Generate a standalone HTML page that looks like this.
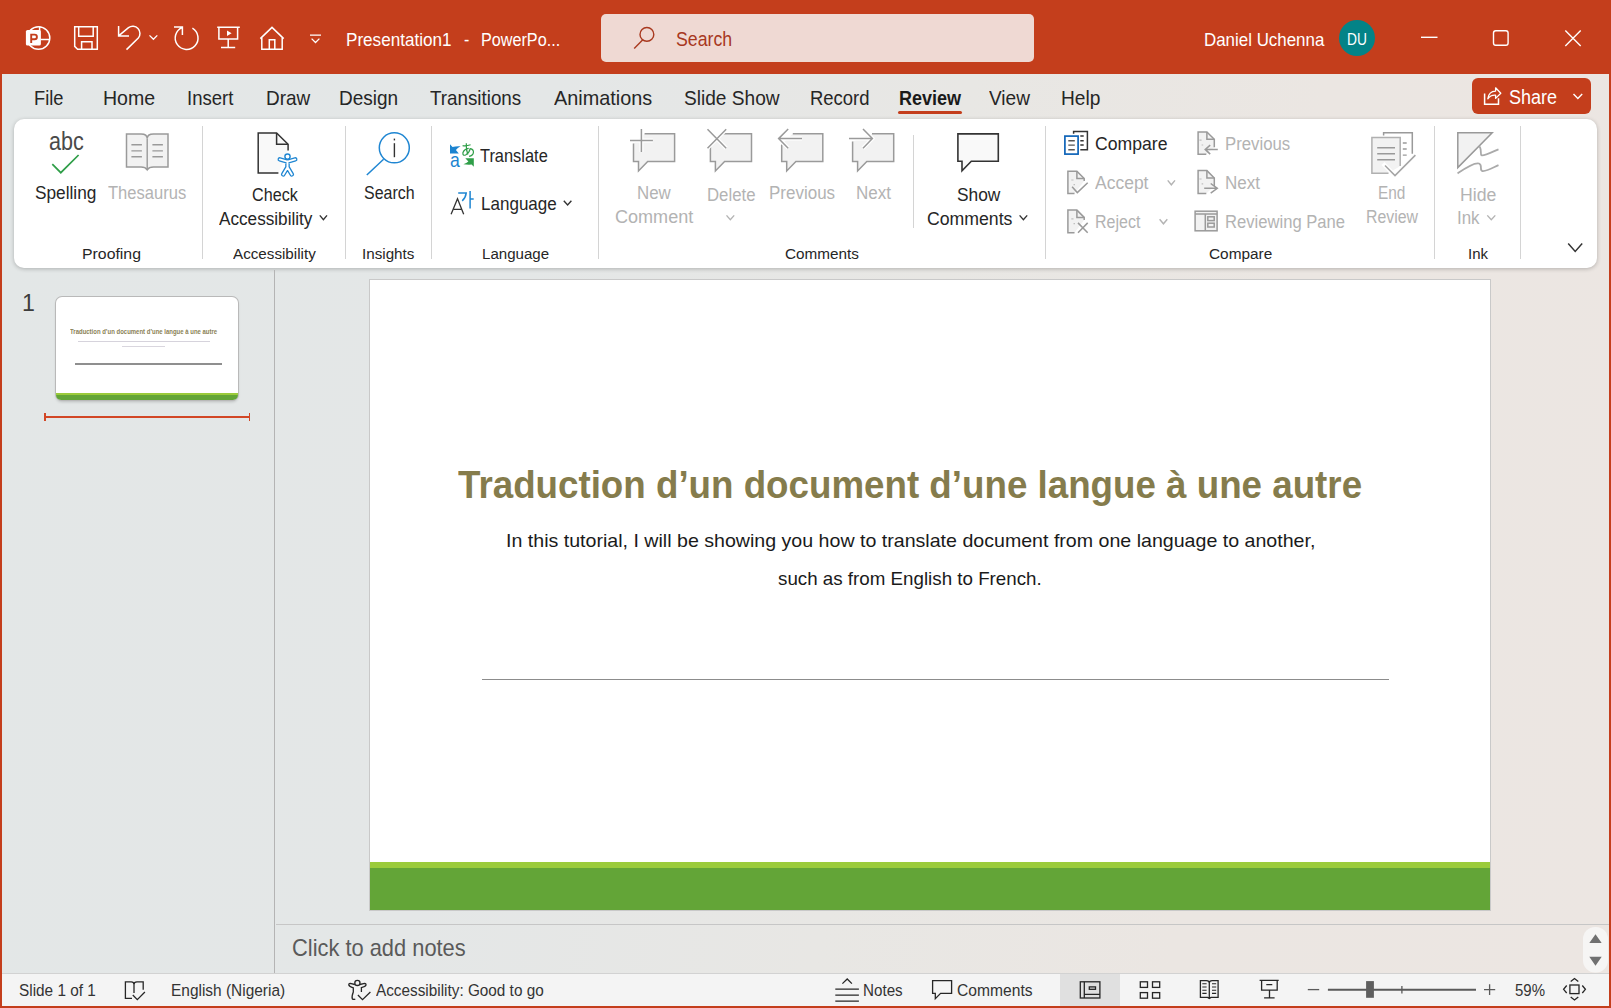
<!DOCTYPE html>
<html><head><meta charset="utf-8"><style>
html,body{margin:0;padding:0;width:1611px;height:1008px;overflow:hidden;}
body{position:relative;font-family:"Liberation Sans",sans-serif;background:#e8e6e4;}
.t{position:absolute;white-space:pre;line-height:1;transform-origin:0 0;}
svg{overflow:visible}
</style></head><body>
<div style="position:absolute;left:0px;top:0px;width:1611px;height:1008px;background:linear-gradient(100deg,#e3e7e7 0%,#e4e7e7 32%,#e8e7e4 55%,#ebe6e2 75%,#ece6e2 100%);"></div>
<div style="position:absolute;left:0px;top:0px;width:1611px;height:74px;background:#c43e1c;"></div>
<div style="position:absolute;left:0px;top:0px;width:2px;height:1008px;background:#c43e1c;"></div>
<div style="position:absolute;left:1609px;top:0px;width:2px;height:1008px;background:#c43e1c;"></div>
<div style="position:absolute;left:0px;top:1006px;width:1611px;height:2px;background:#c43e1c;"></div>
<div style="position:absolute;left:14px;top:119px;width:1583px;height:149px;background:#fff;border-radius:10px;box-shadow:0 1px 4px rgba(0,0,0,0.24);"></div>
<div style="position:absolute;left:274px;top:270px;width:1px;height:703px;background:#b4b4b4;"></div>
<div style="position:absolute;left:370px;top:280px;width:1120px;height:630px;background:#fff;box-shadow:0 0 0 1px #c9c9c9;"></div>
<div style="position:absolute;left:370px;top:862px;width:1120px;height:6px;background:#9bcb3b;"></div>
<div style="position:absolute;left:370px;top:868px;width:1120px;height:42px;background:#63a537;"></div>
<div style="position:absolute;left:276px;top:924px;width:1333px;height:1px;background:#c6c6c6;"></div>
<div style="position:absolute;left:2px;top:974px;width:1607px;height:32px;background:#f4f4f4;box-shadow:0 -1px 0 #d2d2d2;"></div>
<div style="position:absolute;left:601px;top:14px;width:433px;height:48px;background:#efd9d3;border-radius:5px;"></div>
<div class="t" style="left:345.5px;top:30.6px;font-size:18.26px;color:#fff;transform:scaleX(0.9362);">Presentation1</div>
<div class="t" style="left:463.7px;top:30.6px;font-size:18.26px;color:#fff;transform:scaleX(0.8715);">-</div>
<div class="t" style="left:480.8px;top:30.6px;font-size:18.26px;color:#fff;transform:scaleX(0.8867);">PowerPo...</div>
<div class="t" style="left:675.8px;top:30.4px;font-size:19.71px;color:#a8381e;transform:scaleX(0.9015);">Search</div>
<div class="t" style="left:1203.6px;top:30.7px;font-size:18.26px;color:#fff;transform:scaleX(0.9266);">Daniel Uchenna</div>
<div style="position:absolute;left:1339px;top:20px;width:36px;height:36px;background:#038387;border-radius:50%;"></div>
<div class="t" style="left:34.3px;top:88.4px;font-size:20.14px;color:#262626;transform:scaleX(0.9088);">File</div>
<div class="t" style="left:103.4px;top:88.4px;font-size:20.14px;color:#262626;transform:scaleX(0.9714);">Home</div>
<div class="t" style="left:187.4px;top:88.4px;font-size:20.14px;color:#262626;transform:scaleX(0.9210);">Insert</div>
<div class="t" style="left:265.6px;top:88.4px;font-size:20.14px;color:#262626;transform:scaleX(0.9424);">Draw</div>
<div class="t" style="left:339.3px;top:88.4px;font-size:20.14px;color:#262626;transform:scaleX(0.9441);">Design</div>
<div class="t" style="left:430.4px;top:88.4px;font-size:20.14px;color:#262626;transform:scaleX(0.9338);">Transitions</div>
<div class="t" style="left:554.3px;top:88.4px;font-size:20.14px;color:#262626;transform:scaleX(0.9854);">Animations</div>
<div class="t" style="left:684.0px;top:88.4px;font-size:20.14px;color:#262626;transform:scaleX(0.9496);">Slide Show</div>
<div class="t" style="left:809.5px;top:88.4px;font-size:20.14px;color:#262626;transform:scaleX(0.9178);">Record</div>
<div class="t" style="left:989.0px;top:88.4px;font-size:20.14px;color:#262626;transform:scaleX(0.9469);">View</div>
<div class="t" style="left:1060.6px;top:88.4px;font-size:20.14px;color:#262626;transform:scaleX(0.9510);">Help</div>
<div class="t" style="left:898.7px;top:88.4px;font-size:20.14px;color:#1a1a1a;font-weight:bold;transform:scaleX(0.8959);">Review</div>
<div style="position:absolute;left:898px;top:111px;width:64px;height:3px;background:#c43e1c;border-radius:2px;"></div>
<div style="position:absolute;left:1472px;top:78px;width:119px;height:36px;background:#c43e1c;border-radius:6px;"></div>
<div class="t" style="left:1508.6px;top:88.0px;font-size:19.57px;color:#fff;transform:scaleX(0.9213);">Share</div>
<div class="t" style="left:35.4px;top:183.9px;font-size:18.26px;color:#262626;transform:scaleX(0.9450);">Spelling</div>
<div class="t" style="left:108.0px;top:183.9px;font-size:18.26px;color:#b3b3b3;transform:scaleX(0.9064);">Thesaurus</div>
<div class="t" style="left:251.7px;top:185.9px;font-size:18.26px;color:#262626;transform:scaleX(0.8849);">Check</div>
<div class="t" style="left:218.5px;top:209.9px;font-size:18.26px;color:#262626;transform:scaleX(0.9402);">Accessibility</div>
<div class="t" style="left:363.6px;top:183.7px;font-size:18.26px;color:#262626;transform:scaleX(0.8745);">Search</div>
<div class="t" style="left:480.2px;top:146.7px;font-size:18.26px;color:#262626;transform:scaleX(0.8987);">Translate</div>
<div class="t" style="left:481.2px;top:195.2px;font-size:18.26px;color:#262626;transform:scaleX(0.9330);">Language</div>
<div class="t" style="left:637.0px;top:183.8px;font-size:18.26px;color:#b3b3b3;transform:scaleX(0.9252);">New</div>
<div class="t" style="left:614.7px;top:207.8px;font-size:18.26px;color:#b3b3b3;transform:scaleX(0.9892);">Comment</div>
<div class="t" style="left:707.2px;top:186.1px;font-size:18.26px;color:#b3b3b3;transform:scaleX(0.9188);">Delete</div>
<div class="t" style="left:768.9px;top:183.8px;font-size:18.26px;color:#b3b3b3;transform:scaleX(0.9304);">Previous</div>
<div class="t" style="left:856.0px;top:183.8px;font-size:18.26px;color:#b3b3b3;transform:scaleX(0.9322);">Next</div>
<div class="t" style="left:956.6px;top:186.1px;font-size:18.26px;color:#262626;transform:scaleX(0.9501);">Show</div>
<div class="t" style="left:926.5px;top:209.9px;font-size:18.26px;color:#262626;transform:scaleX(0.9685);">Comments</div>
<div class="t" style="left:1094.5px;top:135.0px;font-size:18.26px;color:#262626;transform:scaleX(0.9653);">Compare</div>
<div class="t" style="left:1094.5px;top:173.9px;font-size:18.26px;color:#b3b3b3;transform:scaleX(0.9583);">Accept</div>
<div class="t" style="left:1094.5px;top:212.5px;font-size:18.26px;color:#b3b3b3;transform:scaleX(0.8771);">Reject</div>
<div class="t" style="left:1224.9px;top:134.9px;font-size:18.26px;color:#b3b3b3;transform:scaleX(0.9191);">Previous</div>
<div class="t" style="left:1224.9px;top:173.6px;font-size:18.26px;color:#b3b3b3;transform:scaleX(0.9322);">Next</div>
<div class="t" style="left:1224.9px;top:212.8px;font-size:18.26px;color:#b3b3b3;transform:scaleX(0.9101);">Reviewing Pane</div>
<div class="t" style="left:1378.2px;top:183.8px;font-size:18.26px;color:#b3b3b3;transform:scaleX(0.8433);">End</div>
<div class="t" style="left:1366.4px;top:208.0px;font-size:18.26px;color:#b3b3b3;transform:scaleX(0.8702);">Review</div>
<div class="t" style="left:1459.8px;top:186.1px;font-size:18.26px;color:#b3b3b3;transform:scaleX(0.9692);">Hide</div>
<div class="t" style="left:1457.4px;top:209.4px;font-size:18.26px;color:#b3b3b3;transform:scaleX(0.9278);">Ink</div>
<div class="t" style="left:81.7px;top:246.1px;font-size:15.36px;color:#262626;transform:scaleX(1.0311);">Proofing</div>
<div class="t" style="left:232.6px;top:246.1px;font-size:15.36px;color:#262626;transform:scaleX(0.9897);">Accessibility</div>
<div class="t" style="left:361.8px;top:246.1px;font-size:15.36px;color:#262626;transform:scaleX(0.9897);">Insights</div>
<div class="t" style="left:481.7px;top:246.1px;font-size:15.36px;color:#262626;transform:scaleX(0.9817);">Language</div>
<div class="t" style="left:785.0px;top:246.1px;font-size:15.36px;color:#262626;transform:scaleX(0.9950);">Comments</div>
<div class="t" style="left:1208.7px;top:246.1px;font-size:15.36px;color:#262626;transform:scaleX(1.0019);">Compare</div>
<div class="t" style="left:1467.6px;top:246.1px;font-size:15.36px;color:#262626;transform:scaleX(0.9759);">Ink</div>
<div style="position:absolute;left:202px;top:126px;width:1px;height:133px;background:#d4d4d4;"></div>
<div style="position:absolute;left:345px;top:126px;width:1px;height:133px;background:#d4d4d4;"></div>
<div style="position:absolute;left:431px;top:126px;width:1px;height:133px;background:#d4d4d4;"></div>
<div style="position:absolute;left:598px;top:126px;width:1px;height:133px;background:#d4d4d4;"></div>
<div style="position:absolute;left:1045px;top:126px;width:1px;height:133px;background:#d4d4d4;"></div>
<div style="position:absolute;left:1434px;top:126px;width:1px;height:133px;background:#d4d4d4;"></div>
<div style="position:absolute;left:1520px;top:126px;width:1px;height:133px;background:#d4d4d4;"></div>
<div style="position:absolute;left:913px;top:135px;width:1px;height:93px;background:#d4d4d4;"></div>
<div class="t" style="left:21.9px;top:291.9px;font-size:23.19px;color:#3c3c3c;transform:scaleX(1.0000);">1</div>
<div class="t" style="left:458.4px;top:465.8px;font-size:38.84px;color:#857c4c;font-weight:bold;transform:scaleX(0.9460);">Traduction d’un document d’une langue à une autre</div>
<div class="t" style="left:505.5px;top:531.8px;font-size:18.84px;color:#1a1a1a;transform:scaleX(1.0408);">In this tutorial, I will be showing you how to translate document from one language to another,</div>
<div class="t" style="left:778.3px;top:569.6px;font-size:18.84px;color:#1a1a1a;transform:scaleX(0.9961);">such as from English to French.</div>
<div style="position:absolute;left:482px;top:679px;width:907px;height:1px;background:#8c8c8c;"></div>
<div class="t" style="left:292.0px;top:936.5px;font-size:23.19px;color:#5a5a5a;transform:scaleX(0.9424);">Click to add notes</div>
<div class="t" style="left:18.9px;top:983.2px;font-size:15.65px;color:#333;transform:scaleX(0.9819);">Slide 1 of 1</div>
<div class="t" style="left:171.3px;top:983.2px;font-size:15.65px;color:#333;transform:scaleX(0.9871);">English (Nigeria)</div>
<div class="t" style="left:375.9px;top:983.2px;font-size:15.65px;color:#333;transform:scaleX(0.9791);">Accessibility: Good to go</div>
<div class="t" style="left:862.5px;top:983.2px;font-size:15.65px;color:#333;transform:scaleX(0.9709);">Notes</div>
<div class="t" style="left:957.0px;top:983.2px;font-size:15.65px;color:#333;transform:scaleX(0.9991);">Comments</div>
<div class="t" style="left:1514.7px;top:982.8px;font-size:15.94px;color:#333;transform:scaleX(0.9402);">59%</div>
<div style="position:absolute;left:1060px;top:974px;width:60px;height:32px;background:#e0e0e0;"></div>
<svg style="position:absolute;left:0px;top:0px;" width="400" height="74" viewBox="0 0 400 74" fill="none">
<g stroke="#ffffff" stroke-width="1.5" fill="none">
 <circle cx="38.5" cy="38" r="11.3"/>
 <path d="M39.6 26.5 V31 M40.5 39.6 H49.6"/>
 <path d="M74.7 26.7 H97.3 V49.3 H77.6 L74.7 46.4 Z"/>
 <path d="M78.7 26.7 V36.2 H93.2 V26.7"/>
 <path d="M81.6 49.3 V41.8 H92 V49.3"/>
 <path d="M118.6 26 V36 H129 M119.2 35.4 L128.5 27.6 A7.2 7.2 0 0 1 138.3 38 L126.5 49.6"/>
 <path d="M149.5 35.4 L153.4 39.3 L157.3 35.4" stroke-width="1.3"/>
 <path d="M174 27 H182.4 V35 M182 27.6 A11.4 11.4 0 1 0 192.4 28.2"/>
 <path d="M217.2 27.2 H239.8 M218.9 27.2 V39 H237.6 V27.2 M228.2 39 V47.6 M221 47.6 H235.2"/>
 <path d="M260.3 38.6 L272 27.4 L283.7 38.6 M261.8 37.4 V49.2 H282.2 V37.4 M269.3 49.2 V39.8 H274.8 V49.2"/>
 <path d="M310 35.2 H321 M311.6 38.6 L315.5 42.5 L319.4 38.6" stroke-width="1.3"/>
 <path d="M642.8 39.8 L634.2 48.4" stroke="#a8381e" stroke-width="1.4"/>
 <circle cx="646.9" cy="34.4" r="6.9" stroke="#a8381e" stroke-width="1.4"/>
 <path d="M1421 37.3 H1437.5" stroke-width="1.4"/>
 <rect x="1493.5" y="30.7" width="14.6" height="14.6" rx="2.2" stroke-width="1.4"/>
 <path d="M1565.3 30.5 L1580.7 45.9 M1580.7 30.5 L1565.3 45.9" stroke-width="1.4"/>
</g>
<path d="M227 30.6 V35.9 L231.6 33.25 Z" fill="#ffffff"/>
<rect x="25.9" y="30" width="15" height="15.6" rx="1.6" fill="#ffffff"/>
<path d="M31.2 43 V34.6 H34.6 A2.3 2.3 0 0 1 34.6 39.2 H31.2" stroke="#c43e1c" stroke-width="1.9" fill="none"/>
</svg>
<div class="t" style="left:1347.1px;top:31.7px;font-size:15.80px;color:#fff;transform:scaleX(0.8722);">DU</div>
<div class="t" style="left:48.6px;top:129.1px;font-size:25.22px;color:#4a4a4a;transform:scaleX(0.8559);">abc</div>
<svg style="position:absolute;left:0px;top:0px;" width="1611" height="300" viewBox="0 0 1611 300" fill="none">
<path d="M52.3 164.2 L60.8 172.7 L78.6 155" stroke="#2f9e48" stroke-width="1.7"/>
<!-- thesaurus -->
<path d="M126.5 134 H141 Q147.2 134 147.2 138.6 Q147.2 134 153.5 134 H168 V167 H153.5 Q149 167 147.2 169.8 Q145.4 167 141 167 H126.5 Z" fill="#f2f2f2" stroke="#9a9a9a" stroke-width="1.5"/>
<path d="M147.2 138.6 V169.5 M131.4 144.7 H141.9 M131.4 150.9 H141.9 M131.4 156.8 H141.9 M152.4 144.7 H162.9 M152.4 150.9 H162.9 M152.4 156.8 H162.9" stroke="#9a9a9a" stroke-width="1.4"/>
<!-- check accessibility doc -->
<path d="M278.4 173.1 H258.2 V132.9 H276.6 L288.1 144.3 V150.6" fill="#f9f9f9" stroke="#333333" stroke-width="1.5"/>
<path d="M276.6 132.9 V144.3 H288.1" stroke="#333333" stroke-width="1.5"/>
<g stroke-linecap="round" stroke-linejoin="round">
<path d="M279.8 159.4 L287.5 161.6 L295.2 159.4 M287.5 161.6 V167.2 L283.2 174.4 M287.5 167.2 L291.8 174.4" stroke="#1f86d2" stroke-width="4.6"/>
<path d="M279.8 159.4 L287.5 161.6 L295.2 159.4 M287.5 161.6 V167.2 L283.2 174.4 M287.5 167.2 L291.8 174.4" stroke="#fff" stroke-width="2.0"/>
<circle cx="287.5" cy="156.6" r="2.6" stroke="#1f86d2" stroke-width="1.4" fill="#fff"/>
</g>
<!-- insights search -->
<circle cx="394.3" cy="147.8" r="15" stroke="#1f86d2" stroke-width="1.5"/>
<path d="M383.6 159.2 L366.8 175" stroke="#1f86d2" stroke-width="1.5"/>
<path d="M394.4 143.2 V157.2" stroke="#333333" stroke-width="1.4"/>
<rect x="393.7" y="138.6" width="1.4" height="1.8" fill="#333333"/>
<!-- translate -->
<path d="M450 144.3 L452.5 147 Q456 146 460.6 146.3 Q457.5 147.8 455.9 149.9 L458.8 153.6 H450 Z" fill="#1c84d0"/>
<path d="M465.3 158.2 H473.8 V166.7 L471.6 164.6 Q467 164.8 463.4 164.3 Q466.5 163.3 468.4 161.5 Z" fill="#2f9e48"/>
<path d="M462.6 145.6 Q466 146.4 470.6 144.8 M466.3 143.2 Q465.9 150 467.9 154.6 M468.7 148.4 Q464.3 148.8 462.9 152.8 Q462.6 156 465.6 155 Q469.3 153 470.2 148.6 Q473.8 149.3 473.4 152.6 Q473 155.6 469.1 156.4" stroke="#2f9e48" stroke-width="1.2"/>
<!-- language -->
<path d="M451.1 214.3 L457.5 198.7 L463.7 214.3 M453.8 209.3 H461.2" stroke="#333333" stroke-width="1.3"/>
<path d="M458.2 193.1 H466.2 Q465.5 198 462.2 200.9 M470.1 191.1 V208.4 M470.1 199 H473.7" stroke="#1f86d2" stroke-width="1.5"/>
<!-- comment bubbles -->
<path d="M644.6 133.7 H674.6 V161.4 H647.7 L638.5 171 V161.4 H633.5 V143.5" fill="#f2f2f2" stroke="#9a9a9a" stroke-width="1.5"/>
<path d="M630 140.4 H652.9 M641.4 129 V152" stroke="#fff" stroke-width="4"/>
<path d="M630 140.4 H652.9 M641.4 129 V152" stroke="#9a9a9a" stroke-width="1.5"/>
<path d="M721.5 133.7 H751.5 V161.4 H724.6 L715.4 171 V161.4 H710.4 V147" fill="#f2f2f2" stroke="#9a9a9a" stroke-width="1.5"/>
<path d="M707.5 129.3 L726.2 148.2 M726.2 129.3 L707.5 148.2" stroke="#fff" stroke-width="4"/>
<path d="M707.5 129.3 L726.2 148.2 M726.2 129.3 L707.5 148.2" stroke="#9a9a9a" stroke-width="1.5"/>
<path d="M792.8 133.7 H822.8 V161.4 H795.9 L786.7 171 V161.4 H781.7 V144.5" fill="#f2f2f2" stroke="#9a9a9a" stroke-width="1.5"/>
<path d="M778.6 138.6 H802 M788.2 129 L778.6 138.6 L788.2 148.2" stroke="#fff" stroke-width="4"/>
<path d="M778.6 138.6 H802 M788.2 129 L778.6 138.6 L788.2 148.2" stroke="#9a9a9a" stroke-width="1.5"/>
<path d="M872 133.7 H893.7 V161.4 H866.8 L857.6 171 V161.4 H852.6 V141.5" fill="#f2f2f2" stroke="#9a9a9a" stroke-width="1.5"/>
<path d="M849 138.6 H872.4 M863 129 L872.4 138.6 L863 148.2" stroke="#fff" stroke-width="4"/>
<path d="M849 138.6 H872.4 M863 129 L872.4 138.6 L863 148.2" stroke="#9a9a9a" stroke-width="1.5"/>
<path d="M957.9 133.9 H998.3 V161.2 H971.3 L962 170.8 V161.2 H957.9 Z" fill="#f9f9f9" stroke="#333333" stroke-width="1.6"/>
<!-- compare -->
<path d="M1073.6 133.8 V131.6 H1087.4 V149.7 H1080.3 M1080.3 136.1 H1083.7 M1080.3 140.7 H1083.7 M1080.3 145.1 H1083.7" stroke="#333333" stroke-width="1.5"/>
<rect x="1064.9" y="136.1" width="13.2" height="18" fill="#fff" stroke="#0f64b8" stroke-width="1.7"/>
<path d="M1068.3 140.7 H1074.8 M1068.3 145.1 H1074.8 M1068.3 149.7 H1074.8" stroke="#555" stroke-width="1.4"/>
<!-- accept / reject / prev / next docs -->
<g stroke="#9a9a9a" stroke-width="1.5">
<path d="M1074.5 193.4 H1067.9 V171.2 H1076.9 L1084.2 178.5 V181" fill="#f2f2f2"/>
<path d="M1076.9 171.2 V178.5 H1084.2"/>
<path d="M1072.1 186.8 L1077.3 192.6 L1087.7 182.7"/>
<path d="M1074.5 232.7 H1067.9 V210.1 H1076.9 L1084.2 217.4 V220" fill="#f2f2f2"/>
<path d="M1076.9 210.1 V217.4 H1084.2"/>
<path d="M1078 222.9 L1087.7 232.7 M1087.7 222.9 L1078 232.7"/>
<path d="M1206.3 154.3 H1198.1 V131.9 H1206.9 L1214.3 139.3 V147.3" fill="#f2f2f2"/>
<path d="M1206.9 131.9 V139.3 H1214.3"/>
<path d="M1204.7 149.4 H1217.8 M1210.2 145.1 L1205.2 149.4 L1210.2 154.1"/>
<path d="M1206.3 193.6 H1198.1 V170.6 H1206.9 L1214.3 178 V186" fill="#f2f2f2"/>
<path d="M1206.9 170.6 V178 H1214.3"/>
<path d="M1204.2 188.3 H1217.3 M1210.7 183.5 L1217.3 188.3 L1210.7 193.1"/>
<rect x="1195.1" y="211.2" width="22" height="19.6" fill="#f2f2f2"/>
<path d="M1195.1 214 H1217.1 M1205.3 214 V230.8"/>
<rect x="1207.8" y="216.8" width="6.4" height="3.8"/>
<rect x="1207.8" y="223.2" width="6.4" height="3.8"/>
</g>
<path d="M1199.4 140.2 H1201.6 M1201.6 145 H1203.2 M1199.4 179 H1201.6 M1201.6 183.8 H1203.2 M1071.3 180 H1073.5 M1073.5 184.6 H1075 M1071.3 218.8 H1073.5 M1073.5 223.6 H1075" stroke="#c0c0c0" stroke-width="1.2"/>
<!-- end review -->
<path d="M1383.6 135.4 V132.8 H1412.3 V153.8" stroke="#9a9a9a" stroke-width="1.5"/>
<path d="M1402.8 143 H1406.7 M1402.8 149 H1406.7 M1402.8 155.1 H1406.7" stroke="#9a9a9a" stroke-width="1.4"/>
<path d="M1388.5 173.2 H1371.9 V137.5 H1400.2 V166" fill="#f2f2f2" stroke="#b0b0b0" stroke-width="1.5"/>
<path d="M1377.2 147.7 H1395 M1377.2 153.8 H1395 M1377.2 159.7 H1395" stroke="#9a9a9a" stroke-width="1.4"/>
<path d="M1383 163.5 L1395 175.5 L1415.4 155.1" stroke="#fff" stroke-width="4.5"/>
<path d="M1385 165.5 L1395 175.5 L1415.4 155.1" stroke="#a6a6a6" stroke-width="1.6"/>
<!-- hide ink -->
<path d="M1457.8 132.8 H1492.2 L1457.8 167.6 Z" fill="#f2f2f2" stroke="#999" stroke-width="1.5"/>
<path d="M1479 146.4 C1482 148 1480 154 1481.5 155.3 C1484 156.5 1494 151 1498.5 149.3" stroke="#aaaaaa" stroke-width="1.8"/>
<path d="M1457.6 173.4 C1464 169 1474 162 1479 163.5 C1483 165 1479 170.5 1482.5 171 C1487 171.5 1494 167 1498.5 165.1" stroke="#aaaaaa" stroke-width="1.8"/>
</svg>
<svg style="position:absolute;left:0px;top:0px;" width="1" height="1" viewBox="0 0 1 1" fill="none"><path d="M319.8 215.4 L323.4 219.6 L327 215.4" stroke="#333" stroke-width="1.4"/></svg>
<svg style="position:absolute;left:0px;top:0px;" width="1" height="1" viewBox="0 0 1 1" fill="none"><path d="M563.8 200.8 L567.5999999999999 204.9 L571.4 200.8" stroke="#333" stroke-width="1.4"/></svg>
<svg style="position:absolute;left:0px;top:0px;" width="1" height="1" viewBox="0 0 1 1" fill="none"><path d="M726.5 215.4 L730.35 219.6 L734.2 215.4" stroke="#b3b3b3" stroke-width="1.4"/></svg>
<svg style="position:absolute;left:0px;top:0px;" width="1" height="1" viewBox="0 0 1 1" fill="none"><path d="M1019.6 215.4 L1023.4000000000001 219.6 L1027.2 215.4" stroke="#333" stroke-width="1.4"/></svg>
<svg style="position:absolute;left:0px;top:0px;" width="1" height="1" viewBox="0 0 1 1" fill="none"><path d="M1167.7 180.4 L1171.35 184.8 L1175 180.4" stroke="#b3b3b3" stroke-width="1.4"/></svg>
<svg style="position:absolute;left:0px;top:0px;" width="1" height="1" viewBox="0 0 1 1" fill="none"><path d="M1159.6 219.3 L1163.4499999999998 223.8 L1167.3 219.3" stroke="#b3b3b3" stroke-width="1.4"/></svg>
<svg style="position:absolute;left:0px;top:0px;" width="1" height="1" viewBox="0 0 1 1" fill="none"><path d="M1487.3 215.4 L1491.3 219.8 L1495.3 215.4" stroke="#b3b3b3" stroke-width="1.4"/></svg>
<svg style="position:absolute;left:0px;top:0px;" width="1" height="1" viewBox="0 0 1 1" fill="none"><path d="M1568.2 243.6 L1575.2 251.4 L1582.2 243.6" stroke="#333" stroke-width="1.5"/></svg>
<svg style="position:absolute;left:0px;top:0px;" width="1" height="1" viewBox="0 0 1 1" fill="none"><path d="M1573.5 94 L1577.85 98.6 L1582.2 94" stroke="#fff" stroke-width="1.4"/></svg>
<div class="t" style="left:449.7px;top:149.8px;font-size:20.87px;color:#1c84d0;transform:scaleX(0.8443);">a</div>
<svg style="position:absolute;left:0px;top:0px;" width="1" height="1" viewBox="0 0 1 1" fill="none"><path d="M1484.6 93.4 V104.3 H1498.5 V98.2" stroke="#fff" stroke-width="1.5"/>
<path d="M1487.8 98.8 C1488.5 93.5 1491.8 91.2 1495.6 91.1 V87.8 L1500.8 93.3 L1495.6 98.4 V95.2 C1492.2 95 1489.6 96.2 1487.8 98.8 Z" stroke="#fff" stroke-width="1.3" stroke-linejoin="round"/></svg>
<div style="position:absolute;left:56px;top:297px;width:182px;height:103px;background:#fff;border-radius:6px;box-shadow:0 0 0 1px #b9b9b9, 0 2px 3px rgba(0,0,0,0.18);overflow:hidden;"></div>
<div style="position:absolute;left:56px;top:393px;width:182px;height:2px;background:#9bcb3b;"></div>
<div style="position:absolute;left:56px;top:395px;width:182px;height:5px;background:#63a537;border-radius:0 0 6px 6px;"></div>
<div class="t" style="left:70.4px;top:329.1px;font-size:6.52px;color:#8a7f55;font-weight:bold;transform:scaleX(0.9176);">Traduction d’un document d’une langue à une autre</div>
<div style="position:absolute;left:78px;top:340.5px;width:132px;height:1.3000000000000114px;background:#d6d3dc;"></div>
<div style="position:absolute;left:122px;top:346.2px;width:43px;height:1.3000000000000114px;background:#d9d6de;"></div>
<div style="position:absolute;left:75px;top:363px;width:147px;height:2px;background:#8f8f8f;"></div>
<div style="position:absolute;left:44px;top:416px;width:206px;height:2px;background:#d24726;"></div>
<div style="position:absolute;left:44px;top:413px;width:1.5px;height:8px;background:#d24726;"></div>
<div style="position:absolute;left:248.5px;top:413px;width:1.5px;height:8px;background:#d24726;"></div>
<svg style="position:absolute;left:0px;top:0px;" width="1" height="1" viewBox="0 0 1 1" fill="none"><g stroke="#262626" stroke-width="1.3" fill="none">
<path d="M132 998.3 H125.4 V981.8 H131.2 Q134 981.8 134 984.6 V993 M134 984.6 Q134 981.8 137 981.8 H143.2 V989.8"/>
<path d="M132.8 995 L137.3 999.6 L144.9 992"/>
<circle cx="357.4" cy="982.9" r="2.6"/>
<path d="M354.9 984.5 L350.2 983.3 Q348.5 983.3 348.9 985.3 Q349.3 986.5 353.3 987.8 V992 Q351.5 996.5 352.3 998.8 Q353.4 1000 355.3 999"/>
<path d="M359.9 984.5 L364.6 983.3 Q366.3 983.3 365.9 985.3 Q365.5 986.5 361.4 987.6 V992"/>
<path d="M357.9 995 L362.5 999.6 L370.4 992"/>
<path d="M842.4 983.6 L847.2 979 L851.9 983.6 M835.3 989.2 H858.9 M835.3 995.1 H858.9 M835.3 1001.2 H858.9"/>
<path d="M932.6 980.6 H951.6 V993.4 H940.6 L935.3 998.6 V993.4 H932.6 Z"/>
<rect x="1080.3" y="981.8" width="19.6" height="16.2"/>
<path d="M1084.3 981.8 V998 M1084.3 994.4 H1099.9"/>
<rect x="1089.3" y="986.9" width="6.2" height="2.4"/>
<rect x="1140.3" y="981.8" width="7.2" height="5.6"/><rect x="1152.5" y="981.8" width="7.2" height="5.6"/>
<rect x="1140.3" y="992.6" width="7.2" height="5.6"/><rect x="1152.5" y="992.6" width="7.2" height="5.6"/>
<path d="M1200.4 980.6 H1206.5 Q1209.3 980.6 1209.3 983 Q1209.3 980.6 1212.1 980.6 H1218.1 V997.4 H1211 L1209.3 998.4 L1207.6 997.4 H1200.4 Z M1209.3 983 V997.6"/>
<path d="M1202.3 983.8 H1206.6 M1202.3 987 H1206.6 M1202.3 990.2 H1206.6 M1202.3 993.4 H1206.6 M1212 983.8 H1216.2 M1212 987 H1216.2 M1212 990.2 H1216.2 M1212 993.4 H1216.2" stroke-width="1.1"/>
<path d="M1259.6 980.3 H1278.7 M1261.6 980.3 V990.1 H1277.2 V980.3 M1266.3 984.7 H1272.3 M1269.5 990.1 V997.8 M1264.1 997.8 H1274.6"/>
<path d="M1566.7 985.5 L1563.6 989.3 L1566.7 993 M1582.3 985.5 L1585.4 989.3 L1582.3 993 M1570.7 981.6 L1574.5 978.6 L1578.3 981.6 M1570.7 997 L1574.5 1000 L1578.3 997"/>
<rect x="1569.9" y="985" width="9.1" height="8.6"/>
</g>
<g stroke="#5a5a5a" fill="none">
<path d="M1307.8 989.6 H1319.2" stroke-width="1.3"/>
<path d="M1327.9 989.8 H1476" stroke-width="2"/>
<path d="M1401.9 986.1 V993.6" stroke-width="1.3"/>
<path d="M1484 989.6 H1495.2 M1489.6 984.2 V995" stroke-width="1.3"/>
</g>
<rect x="1366.1" y="981.1" width="7.8" height="16.7" fill="#5f5f5f"/>
<rect x="1583" y="927" width="25" height="45.5" rx="12" fill="#f6f5f4"/>
<path d="M1589.3 943 L1595.5 934.2 L1601.7 943 Z M1589.3 956.8 L1595.5 965.8 L1601.7 956.8 Z" fill="#707070"/>
</svg>
</body></html>
